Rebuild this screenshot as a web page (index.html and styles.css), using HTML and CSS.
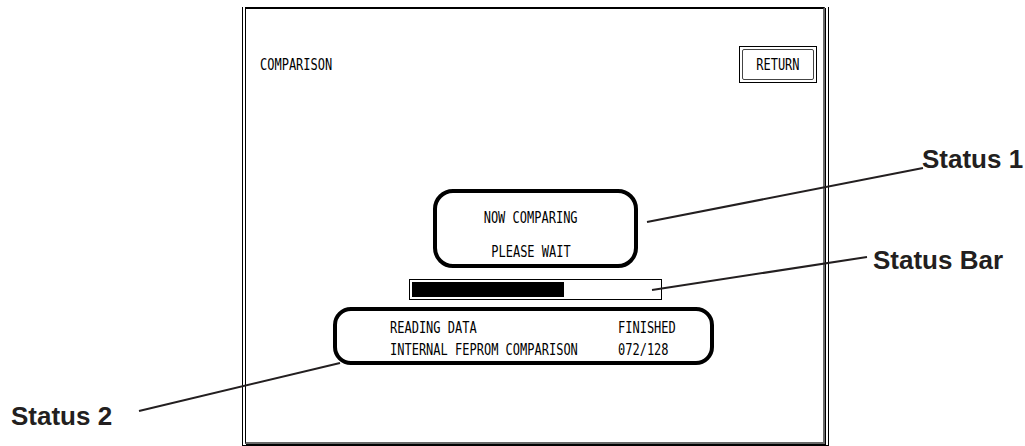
FILE: index.html
```html
<!DOCTYPE html>
<html>
<head>
<meta charset="utf-8">
<link rel="stylesheet" href="styles.css">
</head>
<body>
<div class="frame">
  <div class="panel">
    <div class="header">
      <span class="lcd title">COMPARISON</span>
      <div class="btn"><div class="btn-inner"><span class="lcd mid">RETURN</span></div></div>
    </div>
    <div class="status1">
      <span class="lcd mid">NOW COMPARING</span>
      <span class="lcd mid">PLEASE WAIT</span>
    </div>
    <div class="bar"><div class="bar-fill" style="width:152px"></div></div>
    <div class="status2">
      <span class="lcd">READING DATA</span><span class="lcd">FINISHED</span>
      <span class="lcd">INTERNAL FEPROM COMPARISON</span><span class="lcd">072/128</span>
    </div>
  </div>
</div>
<svg class="callouts" width="1025" height="446" viewBox="0 0 1025 446">
  <line x1="647" y1="222" x2="923" y2="168"/>
  <line x1="652" y1="290" x2="867" y2="257"/>
  <line x1="340" y1="363" x2="139" y2="411"/>
</svg>
<div class="label l1">Status 1</div>
<div class="label l2">Status Bar</div>
<div class="label l3">Status 2</div>
</body>
</html>
```
FILE: styles.css
```css
html, body {
  margin: 0;
  padding: 0;
  overflow: hidden;
  background: #fff;
}
body {
  position: relative;
  width: 1025px;
  height: 446px;
}
* { box-sizing: border-box; }

.frame {
  margin: 7px 0 0 242px;
  width: 587px;
  height: 439px;
  border-left: 1px solid #000;
  border-right: 1px solid #000;
  border-bottom: 1px solid #000;
  padding: 0 2px 1px 2px;
}
.panel {
  width: 580px;
  height: 437px;
  border-top: 2px solid #000;
  border-left: 1px solid #000;
  border-right: 2px solid #6a6a6a;
  border-bottom: 2px solid #6a6a6a;
  box-shadow: 1px 1px 0 #000;
  display: flex;
  flex-direction: column;
  align-items: flex-start;
}

.lcd {
  font-family: "DejaVu Sans Mono", monospace;
  font-size: 16px;
  line-height: 16px;
  display: inline-block;
  white-space: nowrap;
  transform: scaleX(0.75);
  transform-origin: left center;
  color: #000;
}
.lcd.mid { transform-origin: center center; }

.header {
  width: 100%;
  margin-top: 37px;
  padding: 0 6px 0 14px;
  display: flex;
  justify-content: space-between;
  align-items: center;
}
.btn {
  width: 78px;
  height: 37px;
  border: 1px solid #000;
  padding: 2px;
}
.btn-inner {
  width: 100%;
  height: 100%;
  border: 1px solid #444;
  border-radius: 2px;
  display: flex;
  align-items: center;
  justify-content: center;
}

.status1 {
  margin: 106px 0 0 187px;
  width: 205px;
  height: 79px;
  border: 4px solid #000;
  border-radius: 20px;
  padding: 17px 10px 0 0;
  display: flex;
  flex-direction: column;
  align-items: center;
  gap: 18px;
}

.bar {
  margin: 11px 0 0 163px;
  width: 253px;
  height: 21px;
  border: 1px solid #000;
  padding: 2px;
}
.bar-fill {
  height: 100%;
  background: #000;
}

.status2 {
  margin: 7px 0 0 87px;
  width: 381px;
  height: 58px;
  border: 4px solid #000;
  border-radius: 18px;
  padding: 7px 0 0 53px;
  display: grid;
  grid-template-columns: 228px auto;
}
.status2 .lcd { line-height: 19px; }

.callouts {
  position: absolute;
  left: 0;
  top: 0;
  pointer-events: none;
}
.callouts line {
  stroke: #231f20;
  stroke-width: 2;
}

.label {
  position: absolute;
  font-family: "Liberation Sans", Arial, sans-serif;
  font-weight: bold;
  font-size: 26px;
  line-height: 26px;
  color: #231f20;
  white-space: nowrap;
}
.l1 { left: 922px; top: 146px; }
.l2 { left: 873px; top: 247px; }
.l3 { left: 11px; top: 403px; }
```
